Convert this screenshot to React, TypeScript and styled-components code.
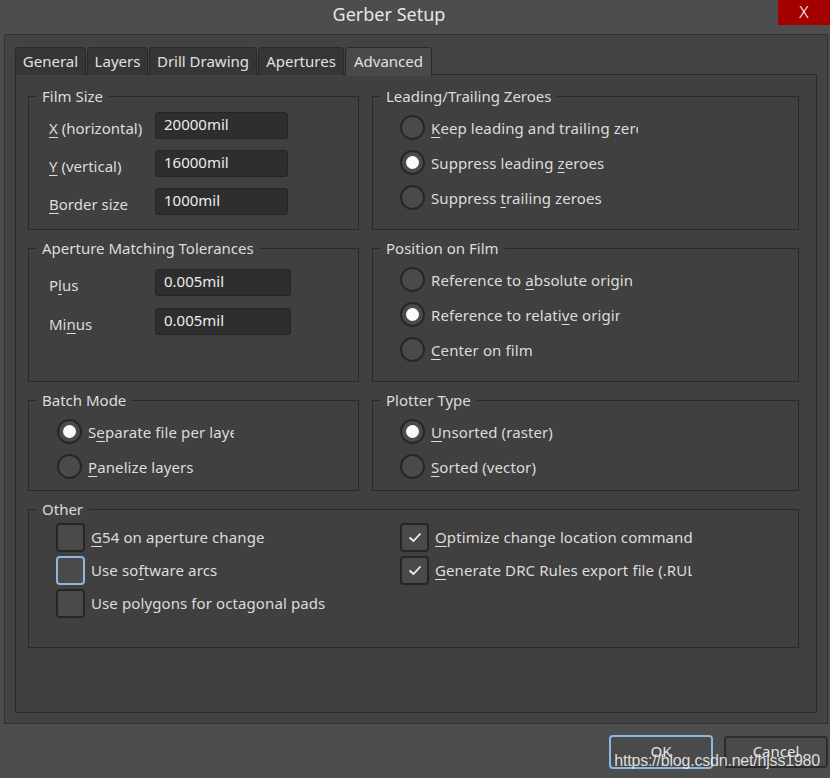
import React from 'react';
import styled, { createGlobalStyle } from 'styled-components';

const colors = {
  chrome: '#4d4d4d',
  frame: '#434343',
  panel: '#404040',
  line: '#2a2a2a',
  text: '#dcdcdc',
  control: '#4a4a4a',
  field: '#2e2e2e',
  focus: '#8db7df',
  close: '#a30000',
};

const GlobalStyle = createGlobalStyle`
  html, body {
    margin: 0;
    padding: 0;
    background: ${colors.chrome};
  }
  body {
    font-family: 'Noto Sans', 'Open Sans', sans-serif;
    color: ${colors.text};
  }
  * {
    box-sizing: border-box;
  }
`;

// letter with a mnemonic underline
function M({ children }: { children: React.ReactNode }) {
  return <Mn>{children}</Mn>;
}

function Radio({ checked, label, clip }: { checked?: boolean; label: React.ReactNode; clip?: number }) {
  return (
    <OptionRow>
      <RadioCircle>{checked && <RadioDot />}</RadioCircle>
      <OptionText $clip={clip}>{label}</OptionText>
    </OptionRow>
  );
}

function Check({ checked, focused, label, clip }: { checked?: boolean; focused?: boolean; label: React.ReactNode; clip?: number }) {
  return (
    <CheckRow>
      <CheckBox $focused={focused}>
        {checked && (
          <svg width="16" height="16" viewBox="0 0 16 16">
            <polyline points="2.5,8.5 6.5,12 13.5,4.5" fill="none" stroke="#f2f2f2" strokeWidth="1.8" />
          </svg>
        )}
      </CheckBox>
      <OptionText $clip={clip}>{label}</OptionText>
    </CheckRow>
  );
}

function Field({ label, value, width }: { label: React.ReactNode; value: string; width: number }) {
  return (
    <FieldRow>
      <FieldLabel>{label}</FieldLabel>
      <Input $width={width}>{value}</Input>
    </FieldRow>
  );
}

const tabs = [
  { name: 'General', width: 71 },
  { name: 'Layers', width: 61 },
  { name: 'Drill Drawing', width: 108 },
  { name: 'Apertures', width: 86 },
  { name: 'Advanced', width: 87, active: true },
];

function App() {
  return (
    <Window>
      <GlobalStyle />
      <TitleBar>
        <Title>Gerber Setup</Title>
        <CloseButton>X</CloseButton>
      </TitleBar>
      <Frame>
        <TabRow>
          {tabs.map(t => (
            <Tab key={t.name} $width={t.width} $active={t.active}>
              {t.name}
            </Tab>
          ))}
        </TabRow>
        <TabPanel>
          <Grid>
            <Group>
              <Legend>Film Size</Legend>
              <Fields $top={15} $gap={11}>
                <Field label={<><M>X</M> (horizontal)</>} value="20000mil" width={133} />
                <Field label={<><M>Y</M> (vertical)</>} value="16000mil" width={133} />
                <Field label={<><M>B</M>order size</>} value="1000mil" width={133} />
              </Fields>
            </Group>
            <Group>
              <Legend>Leading/Trailing Zeroes</Legend>
              <Options $top={18}>
                <Radio label={<><M>K</M>eep leading and trailing zeroes</>} clip={207} />
                <Radio checked label={<>Suppress leading <M>z</M>eroes</>} />
                <Radio label={<>Suppress <M>t</M>railing zeroes</>} />
              </Options>
            </Group>
            <Group>
              <Legend>Aperture Matching Tolerances</Legend>
              <Fields $top={20} $gap={12}>
                <Field label={<>P<M>l</M>us</>} value="0.005mil" width={136} />
                <Field label={<>Mi<M>n</M>us</>} value="0.005mil" width={136} />
              </Fields>
            </Group>
            <Group>
              <Legend>Position on Film</Legend>
              <Options $top={18}>
                <Radio label={<>Reference to <M>a</M>bsolute origin</>} />
                <Radio checked label={<>Reference to relati<M>v</M>e origin</>} clip={189} />
                <Radio label={<><M>C</M>enter on film</>} />
              </Options>
            </Group>
            <Group>
              <Legend>Batch Mode</Legend>
              <Options $top={18} $left={28}>
                <Radio checked label={<>S<M>e</M>parate file per layer</>} clip={146} />
                <Radio label={<><M>P</M>anelize layers</>} />
              </Options>
            </Group>
            <Group>
              <Legend>Plotter Type</Legend>
              <Options $top={18}>
                <Radio checked label={<><M>U</M>nsorted (raster)</>} />
                <Radio label={<><M>S</M>orted (vector)</>} />
              </Options>
            </Group>
            <Group $wide>
              <Legend>Other</Legend>
              <CheckColumns>
                <CheckList>
                  <Check label={<><M>G</M>54 on aperture change</>} />
                  <Check focused label={<>Use so<M>f</M>tware arcs</>} />
                  <Check label="Use polygons for octagonal pads" />
                </CheckList>
                <CheckList>
                  <Check checked label={<><M>O</M>ptimize change location command</>} clip={258} />
                  <Check checked label={<><M>G</M>enerate DRC Rules export file (.RUL)</>} clip={257} />
                </CheckList>
              </CheckColumns>
            </Group>
          </Grid>
        </TabPanel>
      </Frame>
      <Footer>
        <Button $focused>OK</Button>
        <Button>Cancel</Button>
        <Watermark>https://blog.csdn.net/hjss1980</Watermark>
      </Footer>
    </Window>
  );
}

export default App;

const Window = styled.div`
  width: 830px;
  height: 778px;
  display: flex;
  flex-direction: column;
  background: ${colors.chrome};
  overflow: hidden;
`;
const TitleBar = styled.div`
  height: 34px;
  display: flex;
  align-items: flex-start;
`;
const Title = styled.div`
  flex: 1;
  text-align: center;
  font-size: 18px;
  line-height: 28px;
  color: #e6e6e6;
`;
const CloseButton = styled.div`
  width: 52px;
  height: 25px;
  background: ${colors.close};
  color: #fff;
  font-size: 17px;
  font-weight: 300;
  line-height: 24px;
  text-align: center;
`;
const Frame = styled.div`
  height: 690px;
  margin: 0 2px 0 4px;
  padding: 12px 10px 10px 10px;
  background: ${colors.frame};
  border: 1px solid #323232;
  display: flex;
  flex-direction: column;
`;
const TabRow = styled.div`
  display: flex;
  gap: 1px;
  height: 28px;
  margin-bottom: -1px;
  position: relative;
  z-index: 1;
`;
const Tab = styled.div<{ $width: number; $active?: boolean }>`
  width: ${p => p.$width}px;
  height: ${p => (p.$active ? 29 : 28)}px;
  border: 1px solid ${colors.line};
  border-bottom: none;
  border-radius: 4px 4px 0 0;
  background: ${p => (p.$active ? '#494949' : '#363636')};
  font-size: 15px;
  line-height: 27px;
  text-align: center;
  color: #e0e0e0;
`;
const TabPanel = styled.div`
  flex: 1;
  border: 1px solid ${colors.line};
  background: ${colors.panel};
  padding: 21px 17px 0 12px;
`;
const Grid = styled.div`
  display: grid;
  grid-template-columns: 331px 427px;
  grid-template-rows: 134px 134px 91px 139px;
  column-gap: 13px;
  row-gap: 18px;
`;
const Group = styled.div<{ $wide?: boolean }>`
  position: relative;
  border: 1px solid ${colors.line};
  ${p => p.$wide && 'grid-column: 1 / span 2;'}
`;
const Legend = styled.div`
  position: absolute;
  top: -11px;
  left: 7px;
  padding: 0 6px;
  background: ${colors.panel};
  font-size: 15px;
  line-height: 20px;
`;
const Fields = styled.div<{ $top: number; $gap: number }>`
  display: flex;
  flex-direction: column;
  gap: ${p => p.$gap}px;
  padding: ${p => p.$top}px 0 0 20px;
`;
const FieldRow = styled.div`
  display: grid;
  grid-template-columns: 106px auto;
  align-items: center;
  height: 27px;
`;
const FieldLabel = styled.div`
  font-size: 15px;
  padding-top: 4px;
`;
const Input = styled.div<{ $width: number }>`
  width: ${p => p.$width}px;
  height: 27px;
  background: ${colors.field};
  border: 1px solid #252525;
  border-radius: 3px;
  padding-left: 8px;
  font-size: 15px;
  line-height: 23px;
  color: #ececec;
`;
const Options = styled.div<{ $top: number; $left?: number }>`
  display: flex;
  flex-direction: column;
  gap: 10px;
  padding: ${p => p.$top}px 0 0 ${p => p.$left ?? 27}px;
`;
const OptionRow = styled.div`
  display: flex;
  align-items: center;
  gap: 6px;
  height: 25px;
`;
const RadioCircle = styled.div`
  width: 25px;
  height: 25px;
  border-radius: 50%;
  background: ${colors.control};
  border: 2px solid #262626;
  display: flex;
  align-items: center;
  justify-content: center;
  flex: none;
`;
const RadioDot = styled.div`
  width: 13px;
  height: 13px;
  border-radius: 50%;
  background: #fafafa;
`;
const OptionText = styled.div<{ $clip?: number }>`
  font-size: 15px;
  line-height: 22px;
  letter-spacing: 0.1px;
  white-space: nowrap;
  overflow: hidden;
  ${p => p.$clip && `width: ${p.$clip}px;`}
`;
const Mn = styled.span`
  text-decoration: underline;
  text-decoration-thickness: 1px;
  text-underline-offset: 3px;
`;
const CheckColumns = styled.div`
  display: grid;
  grid-template-columns: 344px auto;
  padding: 13px 0 0 27px;
`;
const CheckList = styled.div`
  display: flex;
  flex-direction: column;
  gap: 5px;
`;
const CheckRow = styled.div`
  display: flex;
  align-items: center;
  gap: 6px;
  height: 28px;
`;
const CheckBox = styled.div<{ $focused?: boolean }>`
  width: 29px;
  height: 29px;
  flex: none;
  border-radius: 4px;
  background: ${colors.control};
  border: 2px solid ${p => (p.$focused ? colors.focus : '#262626')};
  display: flex;
  align-items: center;
  justify-content: center;
`;
const Footer = styled.div`
  position: relative;
  flex: 1;
  display: flex;
  justify-content: flex-end;
  align-items: flex-start;
  gap: 11px;
  padding: 11px 2px 0 0;
`;
const Button = styled.div<{ $focused?: boolean }>`
  width: 104px;
  height: ${p => (p.$focused ? 34 : 32)}px;
  margin-top: ${p => (p.$focused ? 0 : 1)}px;
  border-radius: 4px;
  background: ${colors.control};
  border: 2px solid ${p => (p.$focused ? colors.focus : '#2c2c2c')};
  font-size: 15px;
  line-height: ${p => (p.$focused ? 28 : 26)}px;
  text-align: center;
  color: #e6e6e6;
`;
const Watermark = styled.div`
  position: absolute;
  right: 10px;
  bottom: 8px;
  font-family: 'Liberation Sans', Arial, sans-serif;
  font-size: 16px;
  letter-spacing: -0.2px;
  color: rgba(240, 240, 240, 0.9);
  pointer-events: none;
`;
